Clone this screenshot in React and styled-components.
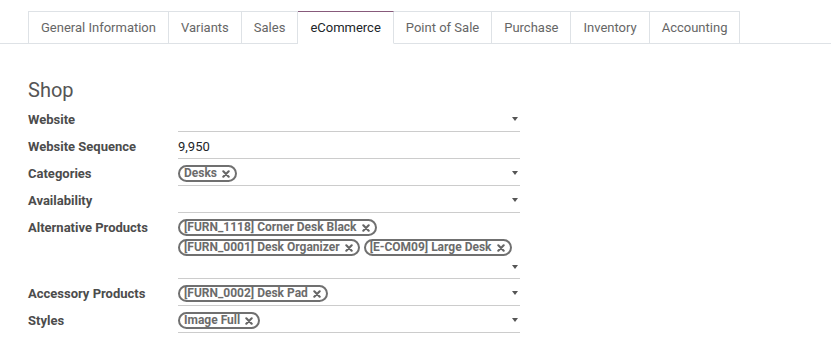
import styled, { createGlobalStyle } from "styled-components";

const GlobalStyle = createGlobalStyle`
  body {
    margin: 0;
    background: #ffffff;
    font-family: Roboto, "Liberation Sans", sans-serif;
    font-size: 13px;
    color: #4c4c4c;
  }
`;

const Page = styled.div`
  padding-top: 11px;
`;

const TabBar = styled.ul`
  display: flex;
  list-style: none;
  margin: 0;
  padding: 0 0 0 28px;
  border-bottom: 1px solid #dee2e6;
`;

const Tab = styled.li`
  height: 31px;
  display: flex;
  align-items: center;
  padding: 0 12px;
  margin-bottom: -1px;
  border: 1px solid #dee2e6;
  border-left-width: ${(p) => (p.first ? "1px" : "0")};
  border-top-color: ${(p) => (p.active ? "#875a7b" : "#dee2e6")};
  border-bottom-color: ${(p) => (p.active ? "#ffffff" : "#dee2e6")};
  background: #ffffff;
  color: ${(p) => (p.active ? "#212529" : "#666666")};
  white-space: nowrap;
`;

const Content = styled.div`
  padding: 0 28px;
`;

const SectionTitle = styled.div`
  margin: 34px 0 3px;
  font-size: 20px;
  line-height: 24px;
  color: #555555;
`;

const Row = styled.div`
  display: grid;
  grid-template-columns: 150px 342px;
`;

const Label = styled.div`
  font-weight: bold;
  line-height: 25px;
  padding-top: 2px;
  color: #4c4c4c;
`;

const Field = styled.div`
  display: flex;
  flex-wrap: wrap;
  align-items: flex-start;
  column-gap: 4px;
  padding-top: 6px;
  min-height: 20px;
  border-bottom: 1px solid #cccccc;
`;

const Tag = styled.span`
  display: inline-flex;
  align-items: center;
  height: 13px;
  line-height: 13px;
  margin-bottom: 3px;
  padding: 0 5px 0 4px;
  border: 2px solid #707070;
  border-radius: 10px;
  font-size: 12px;
  font-weight: bold;
  color: #6b6b6b;
  white-space: nowrap;
`;

const Remove = styled.svg`
  width: 8px;
  height: 8px;
  margin-left: 5px;
`;

const Input = styled.div`
  flex: 1;
  min-width: 60px;
  height: 16px;
  margin-bottom: 3px;
  display: flex;
  align-items: center;
  justify-content: space-between;
  color: #212529;
`;

const Caret = styled.span`
  width: 0;
  height: 0;
  margin-right: 2px;
  border-top: 4px solid #555555;
  border-left: 3px solid transparent;
  border-right: 3px solid transparent;
`;

const tabs = [
  "General Information",
  "Variants",
  "Sales",
  "eCommerce",
  "Point of Sale",
  "Purchase",
  "Inventory",
  "Accounting",
];

const rows = [
  { label: "Website", select: true },
  { label: "Website Sequence", value: "9,950" },
  { label: "Categories", tags: ["Desks"], select: true },
  { label: "Availability", select: true },
  {
    label: "Alternative Products",
    tags: [
      "[FURN_1118] Corner Desk Black",
      "[FURN_0001] Desk Organizer",
      "[E-COM09] Large Desk",
    ],
    select: true,
  },
  { label: "Accessory Products", tags: ["[FURN_0002] Desk Pad"], select: true },
  { label: "Styles", tags: ["Image Full"], select: true },
];

const TagItem = ({ text }) => (
  <Tag>
    {text}
    <Remove viewBox="0 0 8 8">
      <path
        d="M1.3 1.3 L6.7 6.7 M6.7 1.3 L1.3 6.7"
        stroke="#666666"
        strokeWidth="2.1"
        strokeLinecap="round"
      />
    </Remove>
  </Tag>
);

const App = () => {
  return (
    <Page>
      <GlobalStyle />
      <TabBar>
        {tabs.map((t, i) => (
          <Tab key={t} first={i === 0} active={t === "eCommerce"}>
            {t}
          </Tab>
        ))}
      </TabBar>
      <Content>
        <SectionTitle>Shop</SectionTitle>
        {rows.map((r) => (
          <Row key={r.label}>
            <Label>{r.label}</Label>
            <Field>
              {(r.tags || []).map((t) => (
                <TagItem key={t} text={t} />
              ))}
              <Input>
                <span>{r.value}</span>
                {r.select && <Caret />}
              </Input>
            </Field>
          </Row>
        ))}
      </Content>
    </Page>
  );
};

export default App;
